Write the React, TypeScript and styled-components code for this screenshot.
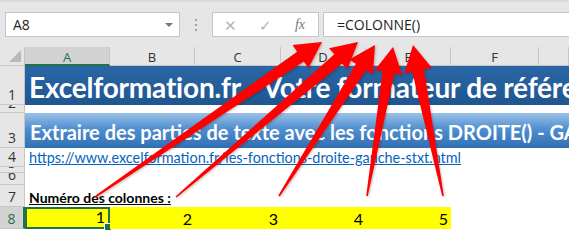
import React from 'react';
import styled, { createGlobalStyle } from 'styled-components';

const GlobalStyle = createGlobalStyle`
    html, body {
        margin: 0;
        padding: 0;
        background: #ffffff;
        overflow: hidden;
    }
    body {
        font-family: 'Open Sans', 'Liberation Sans', sans-serif;
    }
`;

const Page = styled.div`
    position: relative;
    width: 569px;
    height: 251px;
    overflow: hidden;
    background: #ffffff;
`;

const FormulaBar = styled.div`
    display: flex;
    align-items: center;
    height: 47px;
    padding: 0 0 0 5px;
    box-sizing: border-box;
    background: #e6e6e6;
    border-top: 2px solid #dadada;
`;

const NameBox = styled.div`
    display: flex;
    align-items: center;
    justify-content: space-between;
    width: 175px;
    height: 25px;
    box-sizing: border-box;
    padding: 0 6px 0 7px;
    background: #ffffff;
    border: 1px solid #c6c6c6;
    font-size: 14px;
    color: #222;
`;

const DropArrow = styled.span`
    width: 0;
    height: 0;
    border-left: 4px solid transparent;
    border-right: 4px solid transparent;
    border-top: 4px solid #777;
`;

const Grip = styled.div`
    display: flex;
    flex-direction: column;
    gap: 3px;
    width: 32px;
    align-items: center;

    span {
        width: 2px;
        height: 2px;
        background: #a0a0a0;
    }
`;

const ButtonsBox = styled.div`
    display: flex;
    align-items: center;
    width: 107px;
    height: 25px;
    box-sizing: border-box;
    background: #ffffff;
    border: 1px solid #c6c6c6;
    color: #b4b4b4;
`;

const BarButton = styled.span<{ $w: number }>`
    display: flex;
    justify-content: center;
    align-items: center;
    width: ${p => p.$w}px;
    font-size: 15px;
`;

const Fx = styled.span`
    font-family: 'Liberation Serif', serif;
    font-style: italic;
    font-size: 14px;
    color: #777;
    margin-left: 4px;
`;

const FormulaInput = styled.div`
    flex: 1;
    display: flex;
    align-items: center;
    height: 25px;
    margin-left: 4px;
    padding-left: 13px;
    box-sizing: border-box;
    background: #ffffff;
    border: 1px solid #c6c6c6;
    border-right: none;
    font-size: 14px;
    color: #222;
`;

const Sheet = styled.div`
    display: grid;
    grid-template-columns: 25px 85px 85px 86px 85px 85px 88px 1fr;
    grid-template-rows: 19px 39px 8px 35px 19px 6px 12px 22px 22px 22px;
    font-family: Lato, 'Liberation Sans', sans-serif;
`;

const Corner = styled.div`
    background: #e6e6e6;
    border-right: 1px solid #c6c6c6;
    border-bottom: 1px solid #c6c6c6;
    box-sizing: border-box;
    position: relative;

    &::after {
        content: '';
        position: absolute;
        right: 3px;
        bottom: 3px;
        border-left: 12px solid transparent;
        border-bottom: 12px solid #b9b9b9;
    }
`;

const ColHead = styled.div<{ $sel?: boolean }>`
    display: flex;
    justify-content: center;
    align-items: center;
    box-sizing: border-box;
    padding-top: 2px;
    background: ${p => (p.$sel ? '#d2d2d2' : '#e6e6e6')};
    color: ${p => (p.$sel ? '#217346' : '#333')};
    border-right: 1px solid #c6c6c6;
    border-bottom: ${p => (p.$sel ? '2px solid #217346' : '1px solid #c6c6c6')};
    font-family: 'Open Sans', sans-serif;
    font-size: 13px;
`;

const RowHead = styled.div<{ $sel?: boolean }>`
    display: flex;
    justify-content: center;
    align-items: flex-end;
    box-sizing: border-box;
    overflow: hidden;
    background: ${p => (p.$sel ? '#d2d2d2' : '#e6e6e6')};
    color: ${p => (p.$sel ? '#217346' : '#333')};
    border-right: ${p => (p.$sel ? '2px solid #217346' : '1px solid #c6c6c6')};
    border-bottom: 1px solid #c6c6c6;
    font-family: 'Open Sans', sans-serif;
    font-size: 14px;
    line-height: 18px;
`;

const TitleBand = styled.div`
    grid-column: 2 / -1;
    display: flex;
    align-items: center;
    padding: 2px 0 0 4px;
    box-sizing: border-box;
    background: linear-gradient(#2a66a6, #1f5690);
    color: #ffffff;
    font-size: 28px;
    font-weight: 700;
    white-space: nowrap;
    overflow: hidden;
    letter-spacing: -0.2px;
`;

const SubBand = styled.div`
    grid-column: 2 / -1;
    display: flex;
    align-items: flex-end;
    padding: 0 0 4px 5px;
    box-sizing: border-box;
    background: linear-gradient(#9cc1e8 0%, #4f8fd0 45%, #2f6fb3 100%);
    color: #ffffff;
    font-size: 20px;
    font-weight: 700;
    white-space: nowrap;
    overflow: hidden;
`;

const Blank = styled.div`
    grid-column: 2 / -1;
    background: #ffffff;
`;

const LinkCell = styled.a`
    grid-column: 2 / -1;
    align-self: end;
    padding-left: 4px;
    color: #0563c1;
    text-decoration: underline;
    font-size: 14.4px;
    line-height: 18px;
    white-space: nowrap;
`;

const LabelCell = styled.div`
    grid-column: 2 / -1;
    align-self: end;
    padding-left: 4px;
    font-size: 14px;
    font-weight: 700;
    line-height: 19px;
    color: #000;

    span {
        text-decoration: underline;
    }
`;

const NumCell = styled.div<{ $sel?: boolean }>`
    position: relative;
    display: flex;
    justify-content: flex-end;
    align-items: flex-end;
    padding: 0 3px 1px 0;
    box-sizing: border-box;
    background: #ffff00;
    font-size: 16px;
    color: #000;
    border: ${p => (p.$sel ? '2px solid #217346' : 'none')};
`;

const Handle = styled.span`
    position: absolute;
    right: -4px;
    bottom: -4px;
    width: 6px;
    height: 6px;
    background: #217346;
    border: 1px solid #ffffff;
`;

const Arrows = styled.svg`
    position: absolute;
    left: 0;
    top: 0;
    pointer-events: none;
`;

type Pt = [number, number];

const arrowPoints = (tail: Pt, tip: Pt) => {
    const dx = tip[0] - tail[0];
    const dy = tip[1] - tail[1];
    const len = Math.hypot(dx, dy);
    const ux = dx / len;
    const uy = dy / len;
    const nx = -uy;
    const ny = ux;
    const headLen = 26;
    const base: Pt = [tip[0] - ux * headLen, tip[1] - uy * headLen];
    const at = (p: Pt, w: number): string => `${(p[0] + nx * w).toFixed(1)},${(p[1] + ny * w).toFixed(1)}`;
    return [
        at(tail, 0.8),
        at(base, 6),
        at(base, 14),
        `${tip[0]},${tip[1]}`,
        at(base, -14),
        at(base, -6),
        at(tail, -0.8),
    ].join(' ');
};

const arrows: Array<[Pt, Pt]> = [
    [[95, 197], [322, 42]],
    [[176, 197], [358, 42]],
    [[279, 196], [375, 45]],
    [[367, 196], [393, 47]],
    [[443, 196], [413, 45]],
];

const columns = ['A', 'B', 'C', 'D', 'E', 'F', 'G'];

const App = () => (
    <Page>
        <GlobalStyle />
        <FormulaBar>
            <NameBox>
                A8
                <DropArrow />
            </NameBox>
            <Grip>
                <span />
                <span />
                <span />
            </Grip>
            <ButtonsBox>
                <BarButton $w={34}>✕</BarButton>
                <BarButton $w={36}>✓</BarButton>
                <BarButton $w={30}>
                    <Fx>fx</Fx>
                </BarButton>
            </ButtonsBox>
            <FormulaInput>=COLONNE()</FormulaInput>
        </FormulaBar>
        <Sheet>
            <Corner />
            {columns.map(c => (
                <ColHead key={c} $sel={c === 'A'}>
                    {c === 'G' ? '' : c}
                </ColHead>
            ))}

            <RowHead>1</RowHead>
            <TitleBand>Excelformation.fr - Votre formateur de référence</TitleBand>

            <RowHead>2</RowHead>
            <Blank />

            <RowHead>3</RowHead>
            <SubBand>Extraire des parties de texte avec les fonctions DROITE() - GAUCHE() - STXT()</SubBand>

            <RowHead>4</RowHead>
            <LinkCell href="#">https://www.excelformation.fr/les-fonctions-droite-gauche-stxt.html</LinkCell>

            <RowHead>5</RowHead>
            <Blank />

            <RowHead>6</RowHead>
            <Blank />

            <RowHead>7</RowHead>
            <LabelCell>
                <span>Numéro des colonnes :</span>
            </LabelCell>

            <RowHead $sel>8</RowHead>
            {[1, 2, 3, 4, 5].map(n => (
                <NumCell key={n} $sel={n === 1}>
                    {n}
                    {n === 1 && <Handle />}
                </NumCell>
            ))}
            <Blank />

            <RowHead>9</RowHead>
            <Blank />
        </Sheet>
        <Arrows width={569} height={251} viewBox="0 0 569 251">
            <defs>
                <filter id="shade" x="-20%" y="-20%" width="140%" height="140%">
                    <feDropShadow dx="1" dy="1" stdDeviation="1" floodColor="#000" floodOpacity="0.25" />
                </filter>
            </defs>
            {arrows.map(([tail, tip], i) => (
                <polygon key={i} points={arrowPoints(tail, tip)} fill="#ff0000" filter="url(#shade)" />
            ))}
        </Arrows>
    </Page>
);

export default App;
